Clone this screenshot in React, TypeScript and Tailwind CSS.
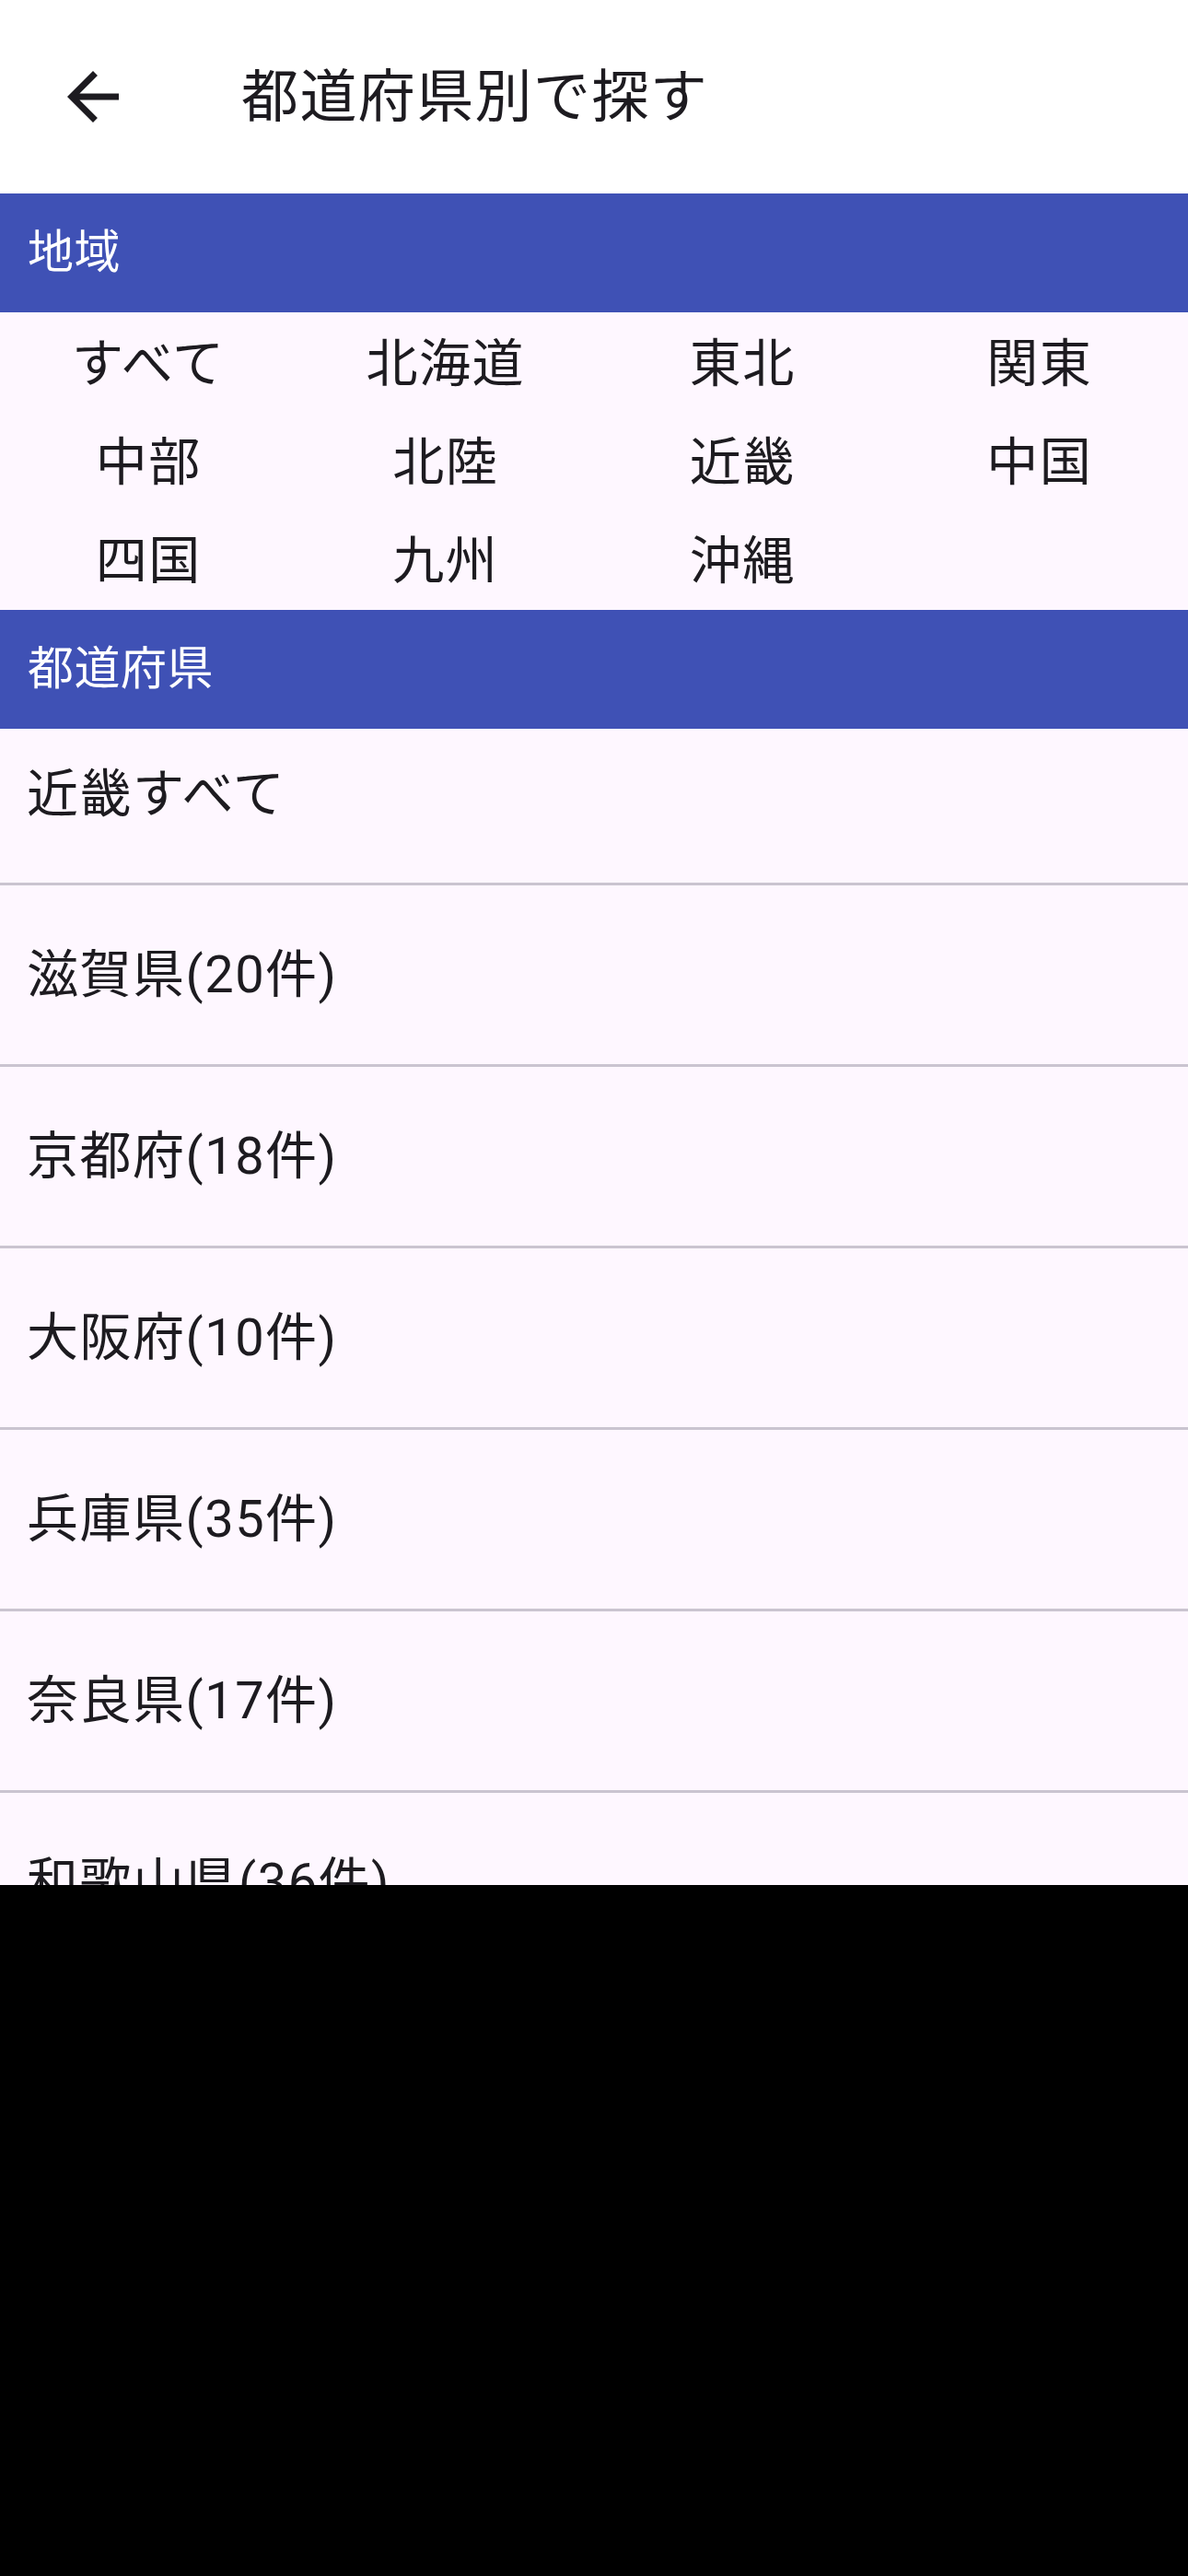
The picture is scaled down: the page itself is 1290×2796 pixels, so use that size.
const regions = [
  "すべて",
  "北海道",
  "東北",
  "関東",
  "中部",
  "北陸",
  "近畿",
  "中国",
  "四国",
  "九州",
  "沖縄",
];

const prefectures = [
  "滋賀県(20件)",
  "京都府(18件)",
  "大阪府(10件)",
  "兵庫県(35件)",
  "奈良県(17件)",
  "和歌山県(36件)",
];

function BackIcon() {
  return (
    <svg viewBox="0 0 24 24" className="w-[84px] h-[84px] fill-[#1d1b20]">
      <path d="M20 11H7.83l5.59-5.59L12 4l-8 8 8 8 1.41-1.41L7.83 13H20v-2z" />
    </svg>
  );
}

function SectionHeader({ label }: { label: string }) {
  return (
    <div className="flex items-center h-[129px] shrink-0 bg-[#3f51b5] pl-[30px] text-white text-[50px] tracking-[0.5px]">
      {label}
    </div>
  );
}

export default function App() {
  return (
    <div
      className="flex flex-col w-[1290px] h-[2796px] bg-black"
      style={{ fontFamily: '"Roboto", "Noto Sans CJK JP", sans-serif' }}
    >
      <div className="flex flex-col h-[2046px] shrink-0 overflow-hidden bg-[#fef7ff] text-[#1d1b20]">
        {/* App bar */}
        <header className="flex items-center h-[210px] shrink-0 bg-white">
          <div className="pl-[59px]">
            <BackIcon />
          </div>
          <h1 className="pl-[119px] text-[62px] font-normal tracking-[1.4px]">都道府県別で探す</h1>
        </header>

        <SectionHeader label="地域" />
        <div className="grid grid-cols-4 grid-rows-3 h-[323px] pt-[3px] shrink-0">
          {regions.map((r) => (
            <div key={r} className="flex items-center justify-center text-[56px] tracking-[1.5px]">
              {r}
            </div>
          ))}
        </div>

        <SectionHeader label="都道府県" />
        <div className="flex flex-col shrink-0">
          <div className="flex items-center h-[170px] shrink-0 pl-[29px] pb-[26px] border-b-[3px] border-[#cac4d0] text-[56px] tracking-[1.5px]">
            近畿すべて
          </div>
          {prefectures.map((p) => (
            <div
              key={p}
              className="flex items-center h-[197px] shrink-0 pl-[29px] border-b-[3px] border-[#cac4d0] text-[56px] tracking-[1.5px]"
            >
              {p}
            </div>
          ))}
        </div>
      </div>
    </div>
  );
}
